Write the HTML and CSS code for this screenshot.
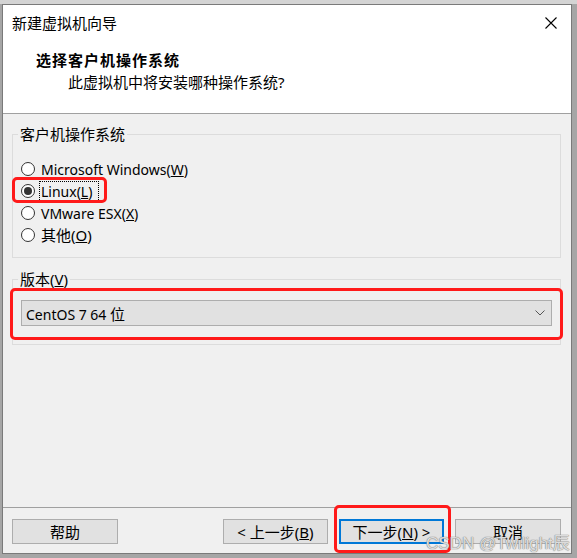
FILE: index.html
```html
<!DOCTYPE html>
<html lang="zh">
<head>
<meta charset="utf-8">
<link rel="stylesheet" href="styles.css">
</head>
<body>
<div class="screen">
  <div class="window">
    <div class="top">
      <div class="titlebar">
        <span class="title">新建虚拟机向导</span>
        <svg class="close" width="12" height="12" viewBox="0 0 12 12"><path d="M0.5 0.5 L11.5 11.5 M11.5 0.5 L0.5 11.5" stroke="#000" stroke-width="1.1" fill="none"/></svg>
      </div>
      <div class="header">
        <div class="h-title">选择客户机操作系统</div>
        <div class="h-sub">此虚拟机中将安装哪种操作系统?</div>
      </div>
    </div>
    <div class="content">
      <fieldset class="group g1">
        <legend>客户机操作系统</legend>
        <div class="radios">
          <div class="radio"><span class="circle"></span><span class="lbl lat">Microsoft Windows(<u>W</u>)</span></div>
          <div class="radio checked"><span class="circle"></span><span class="lbl lat focus">Linux(<u>L</u>)</span></div>
          <div class="radio"><span class="circle"></span><span class="lbl lat">VMware ESX(<u>X</u>)</span></div>
          <div class="radio"><span class="circle"></span><span class="lbl">其他(<u>O</u>)</span></div>
        </div>
      </fieldset>
      <fieldset class="group g2">
        <legend>版本(<u>V</u>)</legend>
        <div class="select">
          <span><span class="lat">CentOS 7 64 </span>位</span>
          <svg width="10" height="6" viewBox="0 0 10 6"><path d="M0.5 0.5 L5 5 L9.5 0.5" stroke="#555" stroke-width="1" fill="none"/></svg>
        </div>
      </fieldset>
    </div>
    <div class="footer">
      <button class="btn help">帮助</button>
      <div class="spacer"></div>
      <button class="btn">&lt; 上一步(<u>B</u>)</button>
      <button class="btn default">下一步(<u>N</u>) &gt;</button>
      <button class="btn cancel">取消</button>
    </div>
    <div class="mark mark-linux"></div>
    <div class="mark mark-select"></div>
    <div class="mark mark-next"></div>
    <div class="watermark">CSDN @Twilight辰</div>
  </div>
</div>
</body>
</html>
```
FILE: styles.css
```css
* { box-sizing: border-box; }
html, body { margin: 0; padding: 0; }
body {
  width: 577px;
  height: 558px;
  overflow: hidden;
  background: #a6a6a6;
  font-family: "Noto Sans", "Noto Sans CJK SC", sans-serif;
  font-size: 15px;
  color: #000;
}
.lat { font-size: 14px; }
.screen {
  height: 558px;
  padding: 4px 0 0 2px;
  background: linear-gradient(#d4d4d4 0, #d4d4d4 4px, #a6a6a6 4px);
}
.window {
  position: relative;
  width: 570px;
  height: 550px;
  border: 1px solid #7a7a7a;
  background: #f0f0f0;
  display: flex;
  flex-direction: column;
}
.top {
  background: #fff;
  height: 109px;
  border-bottom: 1px solid #a0a0a0;
}
.titlebar {
  height: 36px;
  display: flex;
  align-items: center;
  justify-content: space-between;
  padding: 0 14px 0 9px;
}
.title { font-size: 15px; line-height: 20px; }
.close { display: block; }
.header { padding-top: 9px; }
.h-title {
  font-weight: bold;
  font-size: 15px;
  line-height: 20px;
  padding-left: 33px;
  letter-spacing: 1px;
}
.h-sub {
  font-size: 15px;
  line-height: 20px;
  margin-top: 2px;
  padding-left: 65px;
}
.content {
  flex: 1;
  padding: 10px 10px 0 9px;
}
.group {
  margin: 0;
  border: 1px solid #dcdcdc;
  padding: 0;
  min-width: 0;
}
.group legend {
  padding: 0 2px;
  margin-left: -3px;
  line-height: 20px;
  font-size: 15px;
}
.g1 { padding: 14px 8px 11px 8px; }
.radios { display: flex; flex-direction: column; }
.radio {
  height: 22px;
  display: flex;
  align-items: center;
  gap: 5px;
  line-height: 19px;
}
.circle {
  width: 14px;
  height: 14px;
  border: 1px solid #333;
  border-radius: 50%;
  background: #fff;
  position: relative;
  flex: none;
}
.checked .circle::after {
  content: "";
  position: absolute;
  left: 2px; top: 2px;
  width: 8px; height: 8px;
  border-radius: 50%;
  background: #333;
}
.lbl { padding-left: 1px; }
.lbl.focus { outline: 1px dotted #000; outline-offset: 0; padding: 0 6px 0 1px; }
.g2 { margin-top: 11px; padding: 11px 8px 18px 8px; }
.select {
  height: 26px;
  border: 1px solid #adadad;
  background: #e1e1e1;
  display: flex;
  align-items: center;
  justify-content: space-between;
  padding: 0 6px 0 4px;
}
.select svg { display: block; }
.footer {
  border-top: 1px solid #a0a0a0;
  padding: 11px 10px 9px 9px;
  display: flex;
  gap: 11px;
}
.spacer { flex: 1; }
.btn {
  height: 25px;
  width: 105px;
  border: 1px solid #adadad;
  background: #e1e1e1;
  font-family: inherit;
  font-size: 15px;
  line-height: 20px;
  color: #000;
  padding: 0;
  margin: 0;
}
.btn.help { width: 106px; }
.btn.cancel { width: 106px; }
.btn.default { border: 2px solid #0078d7; }
.mark {
  position: absolute;
  border: 3px solid #ff1a1a;
  border-radius: 5px;
}
.mark-linux { left: 9px; top: 172px; width: 95px; height: 26px; }
.mark-select { left: 7px; top: 283px; width: 553px; height: 52px; }
.mark-next { left: 331px; top: 500px; width: 117px; height: 48px; }
.watermark {
  position: absolute;
  left: 423px;
  top: 524px;
  font-family: "Liberation Sans", "Noto Sans CJK SC", sans-serif;
  font-size: 17px;
  color: rgba(235,235,235,0.9);
  text-shadow: 0 0 1px #777, 0 0 1px #777;
  white-space: nowrap;
}
```
